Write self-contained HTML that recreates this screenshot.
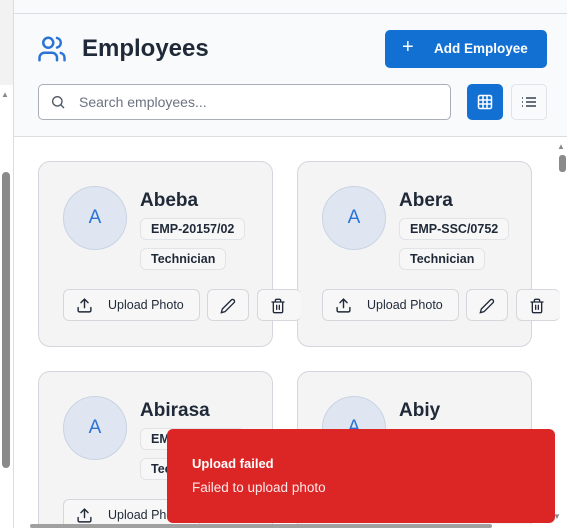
<!DOCTYPE html>
<html style="overflow:hidden"><head><style>
*{box-sizing:border-box;margin:0;padding:0}
html,body{width:567px;height:528px;overflow:hidden}
body{background:#fff;font-family:"Liberation Sans",sans-serif;color:#1f2937}
#w{position:relative;width:567px;height:528px;overflow:hidden}
.abs{position:absolute}
.card{position:absolute;width:235px;height:186px;border:1px solid #d4d6dd;border-radius:12px;background:#f4f4f5}
.c2{height:157px;border-bottom:none;border-radius:12px 12px 0 0}
.av{position:absolute;left:24px;top:24px;width:64px;height:64px;border-radius:50%;background:#dfe6f1;border:1px solid #c9d3e3;color:#2b74d6;font-size:19px;text-align:center;line-height:62px}
.nm{position:absolute;left:101px;top:28px;font-size:19px;font-weight:bold;color:#1f2937}
.bd{position:absolute;left:101px;height:22px;border:1px solid #e2e3e7;border-radius:6px;font-size:12.5px;font-weight:bold;padding:0 10px;line-height:20px;background:#f7f7f8;color:#1f2937}
.btn{position:absolute;height:32px;border:1px solid #d6d7dc;border-radius:6px;background:#f7f7f8}
.up{width:137px;font-size:12.5px;line-height:30px;padding-left:44px}
</style></head><body><div id="w">
<div class="abs" style="left:0;top:0;width:13px;height:85px;background:#f2f2f2"></div>
<div class="abs" style="left:2px;top:172px;width:8px;height:296px;border-radius:4px;background:#8a8a8a"></div>
<div class="abs" style="left:1px;top:90px;font-size:8px;color:#888">▲</div>
<div class="abs" style="left:13px;top:0;width:1px;height:528px;background:#ddd"></div>
<div class="abs" style="left:14px;top:0;width:553px;height:136px;background:#f9fafb"></div>
<div class="abs" style="left:14px;top:13px;width:553px;height:1px;background:#dcdde0"></div>
<div class="abs" style="left:14px;top:136px;width:553px;height:1px;background:#dcdde0"></div>
<svg class="abs" style="left:37px;top:34px" width="30" height="30" viewBox="0 0 24 24" fill="none" stroke="#2b74d6" stroke-width="2" stroke-linecap="round"><path d="M16 21v-2a4 4 0 0 0-4-4H6a4 4 0 0 0-4 4v2"/><circle cx="9" cy="7" r="4"/><path d="M22 21v-2a4 4 0 0 0-3-3.87M16 3.13a4 4 0 0 1 0 7.75"/></svg>
<div class="abs" style="left:82px;top:35px;font-size:24px;font-weight:bold;color:#1f2937">Employees</div>
<div class="abs" style="left:385px;top:30px;width:162px;height:38px;background:#1270d3;border-radius:5px;color:#fff;font-size:13.5px;font-weight:bold;line-height:38px;padding-left:49px">Add Employee</div>
<div class="abs" style="left:402px;top:36px;color:#fff;font-size:20px">+</div>
<div class="abs" style="left:38px;top:84px;width:413px;height:36px;border:1px solid #a9adb8;border-radius:5px;background:#fff;font-size:14px;color:#6b7280;line-height:34px;padding-left:40px">Search employees...</div>
<svg class="abs" style="left:50px;top:94px" width="16" height="16" viewBox="0 0 24 24" fill="none" stroke="#4b5563" stroke-width="2"><circle cx="11" cy="11" r="7"/><path d="M21 21l-5-5"/></svg>
<div class="abs" style="left:467px;top:84px;width:36px;height:36px;background:#1270d3;border-radius:5px"></div>
<svg class="abs" style="left:477px;top:94px" width="16" height="16" viewBox="0 0 16 16" fill="none" stroke="#fff" stroke-width="1.5"><rect x="1.5" y="1.5" width="13" height="13" rx="1.5"/><path d="M6 1.5v13M10 1.5v13M1.5 6h13M1.5 10h13"/></svg>
<div class="abs" style="left:511px;top:84px;width:36px;height:36px;border:1px solid #e2e3e7;background:#f9fafb;border-radius:5px"></div>
<svg class="abs" style="left:521px;top:95px" width="16" height="14" viewBox="0 0 16 14" stroke="#374151" stroke-width="1.5"><path d="M1 3h1M1 7h1M1 11h1M5 3h10M5 7h10M5 11h10"/></svg>
<div class="abs" style="left:557px;top:142px;font-size:8px;color:#888">▲</div>
<div class="abs" style="left:559px;top:155px;width:7px;height:17px;border-radius:3px;background:#8a8a8a"></div>

<div class="card" style="left:38px;top:161px"><div class="av">A</div><div class="nm">Abeba</div><div class="bd" style="top:56px">EMP-20157/02</div><div class="bd" style="top:86px">Technician</div></div>
<div class="card" style="left:297px;top:161px"><div class="av">A</div><div class="nm">Abera</div><div class="bd" style="top:56px">EMP-SSC/0752</div><div class="bd" style="top:86px">Technician</div></div>
<div class="card c2" style="left:38px;top:371px"><div class="av">A</div><div class="nm">Abirasa</div><div class="bd" style="top:56px">EMP-20157/02</div><div class="bd" style="top:86px">Technician</div></div>
<div class="card c2" style="left:297px;top:371px"><div class="av">A</div><div class="nm">Abiy</div></div>

<div class="btn up" style="left:63px;top:289px">Upload Photo</div>
<div class="btn" style="left:207px;top:289px;width:42px"></div>
<div class="btn" style="left:257px;top:289px;width:44px;border-right:none"></div>
<div class="btn up" style="left:322px;top:289px">Upload Photo</div>
<div class="btn" style="left:466px;top:289px;width:42px"></div>
<div class="btn" style="left:516px;top:289px;width:44px;border-right:none"></div>
<div class="btn up" style="left:63px;top:499px;height:29px;border-bottom:none;border-radius:6px 6px 0 0">Upload Photo</div>
<svg class="abs" style="left:76px;top:297px" width="17" height="17" viewBox="0 0 24 24" fill="none" stroke="#1f2937" stroke-width="2" stroke-linecap="round"><path d="M21 15v4a2 2 0 0 1-2 2H5a2 2 0 0 1-2-2v-4M17 8l-5-5-5 5M12 3v12"/></svg>
<svg class="abs" style="left:335px;top:297px" width="17" height="17" viewBox="0 0 24 24" fill="none" stroke="#1f2937" stroke-width="2" stroke-linecap="round"><path d="M21 15v4a2 2 0 0 1-2 2H5a2 2 0 0 1-2-2v-4M17 8l-5-5-5 5M12 3v12"/></svg>
<svg class="abs" style="left:76px;top:507px" width="17" height="17" viewBox="0 0 24 24" fill="none" stroke="#1f2937" stroke-width="2" stroke-linecap="round"><path d="M21 15v4a2 2 0 0 1-2 2H5a2 2 0 0 1-2-2v-4M17 8l-5-5-5 5M12 3v12"/></svg>
<svg class="abs" style="left:220px;top:298px" width="16" height="16" viewBox="0 0 24 24" fill="none" stroke="#1f2937" stroke-width="2" stroke-linecap="round"><path d="M17 3a2.8 2.8 0 0 1 4 4L7.5 20.5 2 22l1.5-5.5Z"/></svg>
<svg class="abs" style="left:479px;top:298px" width="16" height="16" viewBox="0 0 24 24" fill="none" stroke="#1f2937" stroke-width="2" stroke-linecap="round"><path d="M17 3a2.8 2.8 0 0 1 4 4L7.5 20.5 2 22l1.5-5.5Z"/></svg>
<svg class="abs" style="left:270px;top:298px" width="16" height="16" viewBox="0 0 24 24" fill="none" stroke="#1f2937" stroke-width="2" stroke-linecap="round"><path d="M3 6h18M19 6v14a2 2 0 0 1-2 2H7a2 2 0 0 1-2-2V6M8 6V4a2 2 0 0 1 2-2h4a2 2 0 0 1 2 2v2M10 11v6M14 11v6"/></svg>
<svg class="abs" style="left:529px;top:298px" width="16" height="16" viewBox="0 0 24 24" fill="none" stroke="#1f2937" stroke-width="2" stroke-linecap="round"><path d="M3 6h18M19 6v14a2 2 0 0 1-2 2H7a2 2 0 0 1-2-2V6M8 6V4a2 2 0 0 1 2-2h4a2 2 0 0 1 2 2v2M10 11v6M14 11v6"/></svg>

<div class="abs" style="left:167px;top:429px;width:388px;height:94px;background:#dc2626;border-radius:6px;color:#fff;padding:27px 0 0 25px">
<div style="font-size:13px;font-weight:bold">Upload failed</div>
<div style="font-size:13.5px;margin-top:9px;color:#fde8e8">Failed to upload photo</div></div>
<div class="abs" style="left:14px;top:524px;width:553px;height:4px;background:#fff"></div>
<div class="abs" style="left:30px;top:524px;width:462px;height:4px;background:#a0a0a0;border-radius:2px"></div>
<div class="abs" style="left:553px;top:512px;font-size:8px;line-height:10px;color:#888">▼</div>
</div></body></html>
